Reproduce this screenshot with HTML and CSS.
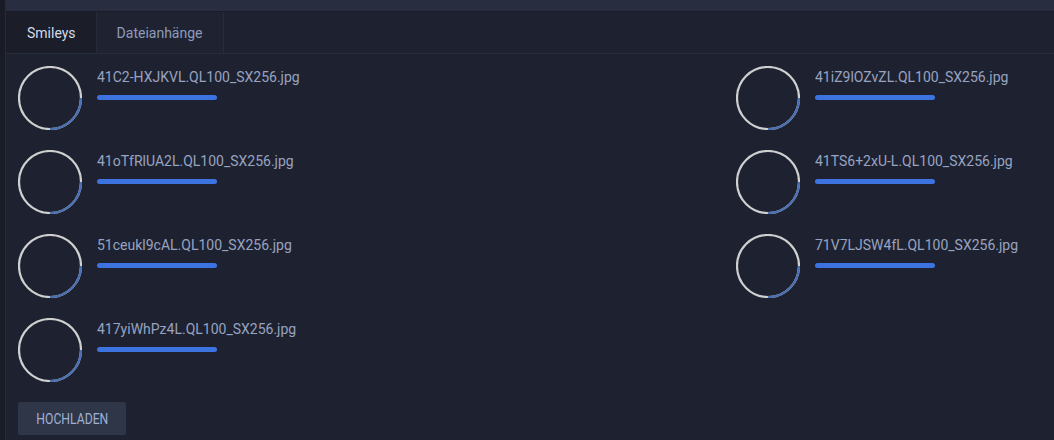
FILE: index.html
```html
<!DOCTYPE html>
<html lang="de">
<head>
<meta charset="utf-8">
<title>Smileys</title>
<link rel="stylesheet" href="styles.css">
</head>
<body>
<div class="side"></div>
<div class="main">
  <div class="topbar"></div>
  <div class="tabs">
    <div class="tab active">Smileys</div>
    <div class="tab">Dateianhänge</div>
  </div>
  <div class="content">
    <div class="grid">
      <div class="item">
        <svg class="ring" width="64" height="64" viewBox="0 0 64 64"><circle cx="32" cy="32" r="31" class="track"/><circle cx="32" cy="32" r="31" class="prog"/></svg>
        <div class="info"><div class="name">41C2-HXJKVL.QL100_SX256.jpg</div><div class="bar"></div></div>
      </div>
      <div class="item">
        <svg class="ring" width="64" height="64" viewBox="0 0 64 64"><circle cx="32" cy="32" r="31" class="track"/><circle cx="32" cy="32" r="31" class="prog"/></svg>
        <div class="info"><div class="name">41iZ9lOZvZL.QL100_SX256.jpg</div><div class="bar"></div></div>
      </div>
      <div class="item">
        <svg class="ring" width="64" height="64" viewBox="0 0 64 64"><circle cx="32" cy="32" r="31" class="track"/><circle cx="32" cy="32" r="31" class="prog"/></svg>
        <div class="info"><div class="name">41oTfRlUA2L.QL100_SX256.jpg</div><div class="bar"></div></div>
      </div>
      <div class="item">
        <svg class="ring" width="64" height="64" viewBox="0 0 64 64"><circle cx="32" cy="32" r="31" class="track"/><circle cx="32" cy="32" r="31" class="prog"/></svg>
        <div class="info"><div class="name">41TS6+2xU-L.QL100_SX256.jpg</div><div class="bar"></div></div>
      </div>
      <div class="item">
        <svg class="ring" width="64" height="64" viewBox="0 0 64 64"><circle cx="32" cy="32" r="31" class="track"/><circle cx="32" cy="32" r="31" class="prog"/></svg>
        <div class="info"><div class="name">51ceukl9cAL.QL100_SX256.jpg</div><div class="bar"></div></div>
      </div>
      <div class="item">
        <svg class="ring" width="64" height="64" viewBox="0 0 64 64"><circle cx="32" cy="32" r="31" class="track"/><circle cx="32" cy="32" r="31" class="prog"/></svg>
        <div class="info"><div class="name">71V7LJSW4fL.QL100_SX256.jpg</div><div class="bar"></div></div>
      </div>
      <div class="item">
        <svg class="ring" width="64" height="64" viewBox="0 0 64 64"><circle cx="32" cy="32" r="31" class="track"/><circle cx="32" cy="32" r="31" class="prog"/></svg>
        <div class="info"><div class="name">417yiWhPz4L.QL100_SX256.jpg</div><div class="bar"></div></div>
      </div>
    </div>
    <button class="upload"><span class="upload-label">HOCHLADEN</span></button>
  </div>
</div>
</body>
</html>
```
FILE: styles.css
```css
html, body {
  margin: 0;
  padding: 0;
  height: 100%;
}
body {
  display: flex;
  background: #1e2230;
  font-family: Roboto, "Liberation Sans", sans-serif;
  overflow: hidden;
}
.side {
  width: 5px;
  flex: none;
  background: #191c26;
  border-right: 1px solid #262b38;
}
.main {
  flex: 1;
  display: flex;
  flex-direction: column;
  background: #1e2230;
}
.topbar {
  height: 11px;
  background: #282e3f;
  border-bottom: 1px solid #1a1d27;
  flex: none;
}
.tabs {
  display: flex;
  height: 41px;
  border-bottom: 1px solid #282d3a;
  flex: none;
}
.tab {
  display: flex;
  align-items: center;
  font-size: 14px;
  color: #8e9bbb;
  padding: 0 20px;
  border-right: 1px solid #272c39;
  background: #1f2331;
}
.tab.active {
  padding: 0 20px 0 21px;
  color: #d3dbec;
  background: #1b1e29;
  border-right: 1px solid #262b38;
}
.content {
  padding: 12px;
}
.grid {
  display: grid;
  grid-template-columns: 718px 1fr;
  row-gap: 20px;
}
.item {
  display: flex;
  gap: 15px;
  height: 64px;
}
.ring {
  flex: none;
  display: block;
}
.track {
  fill: none;
  stroke: #cfcfcf;
  stroke-width: 2.2;
}
.prog {
  fill: none;
  stroke: #4a6fb2;
  stroke-width: 2.2;
  stroke-dasharray: 48.7 200;
}
.info {
  padding-top: 3px;
}
.name {
  font-size: 14px;
  line-height: 16px;
  color: #98a3c1;
}
.bar {
  margin-top: 10px;
  width: 120px;
  height: 5px;
  border-radius: 3px;
  background: #3d73e0;
}
.upload {
  margin-top: 20px;
  width: 108px;
  height: 33px;
  border: none;
  border-radius: 2px;
  background: #2e3648;
  color: #a0b0d2;
  font-family: Roboto, "Liberation Sans", sans-serif;
  font-size: 14px;
  padding: 0;
  cursor: pointer;
}
.upload-label {
  display: inline-block;
  transform: scaleX(0.87);
}
```
